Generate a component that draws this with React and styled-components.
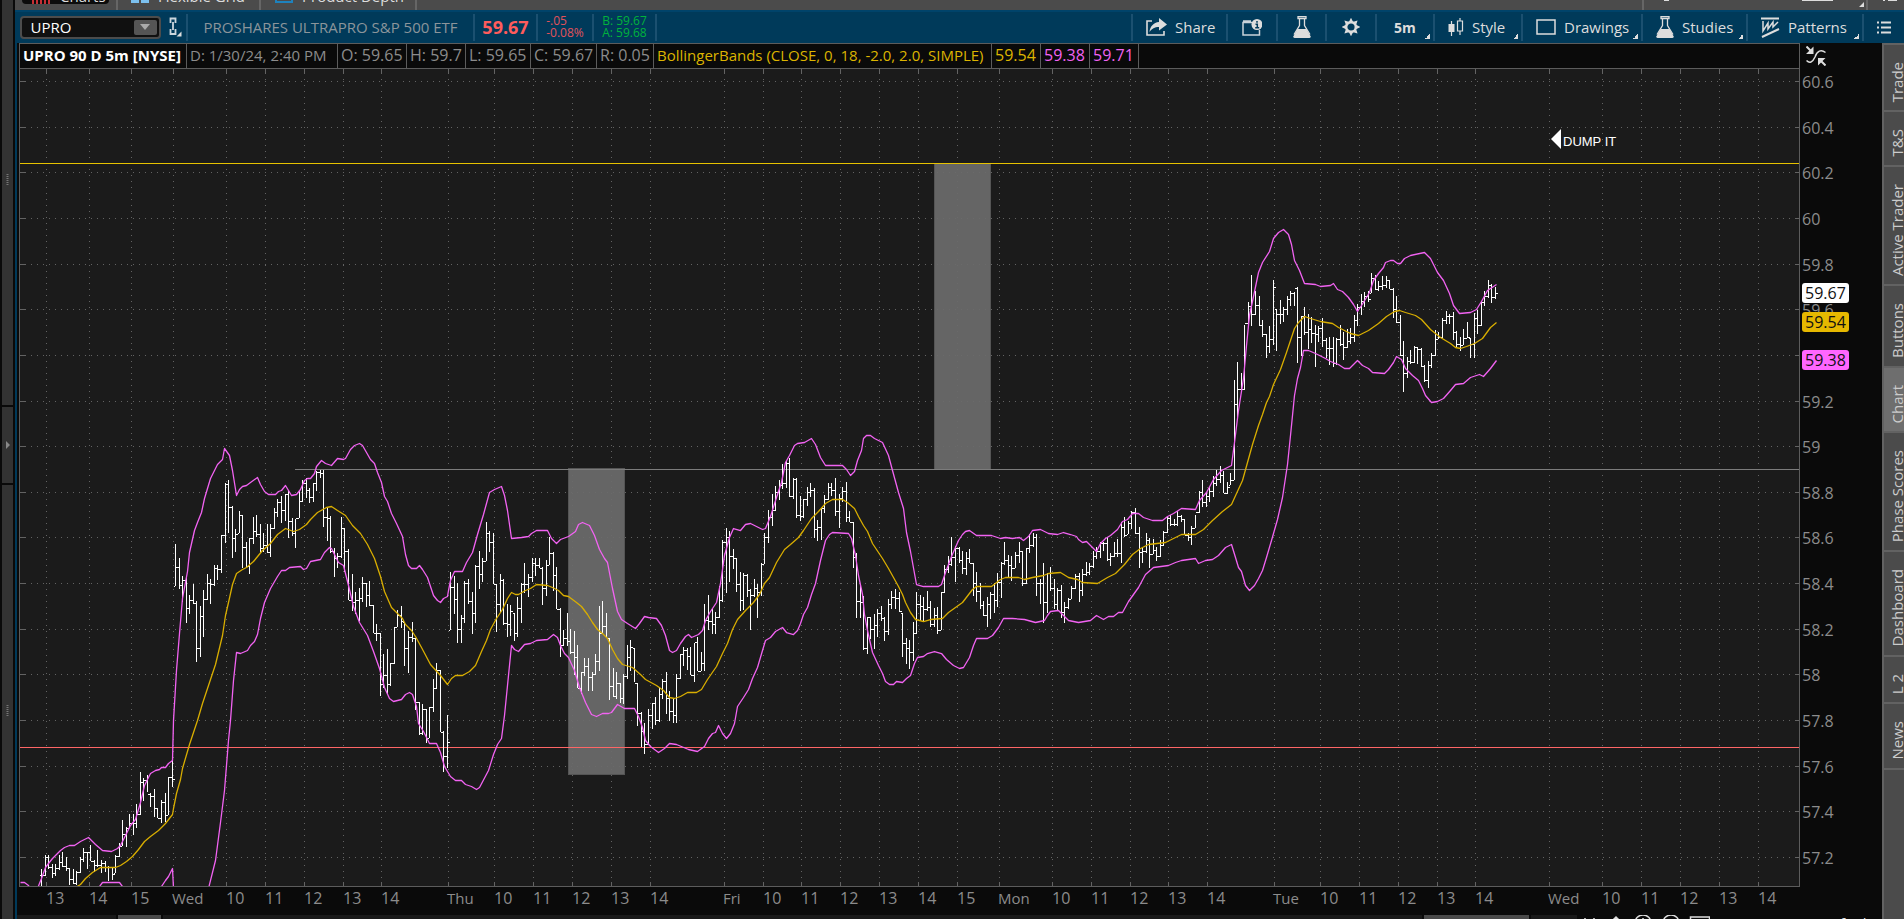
import React from 'react'
import styled, {createGlobalStyle} from 'styled-components';

const GlobalStyle=createGlobalStyle`
*{box-sizing:border-box}
html,body{margin:0;height:100%;background:#0a0a0a}
body{overflow:hidden;font-family:"Open Sans","Noto Sans",sans-serif;font-size:15px;color:#ddd}
button,input{font:inherit;color:inherit;border:0;margin:0;padding:0;background:none}
svg{display:block;flex:none}
`

// one entry per 5 minute bar: high, low, close
const bars=`869 886 875,855 876 857,855 869 867,864 878 873,864 876 868,855 870 862,852 867 866,857 871 868,868 885 879,869 884 883,
871 885 872,857 873 859,848 862 852,852 869 852,845 861 861,860 872 865,850 867 865,860 873 863,861 872 867,866 881 867,
867 880 874,855 873 856,843 857 846,820 846 834,827 847 828,814 828 823,814 835 823,804 828 814,772 815 782,778 801 780,
775 792 794,793 807 796,789 817 808,808 818 818,800 823 802,793 822 815,777 815 777,761 787 779,544 586 567,558 589 585,
576 602 580,576 623 608,595 614 600,584 604 603,601 662 648,606 657 616,590 637 599,574 600 583,579 604 584,565 586 568,
565 580 569,535 573 535,483 543 484,480 533 507,506 558 538,529 552 534,511 533 515,515 568 547,542 568 566,538 574 538,
517 544 531,515 537 534,524 553 548,533 552 545,524 553 552,524 557 528,508 529 512,499 517 502,496 523 510,494 521 494,
490 538 521,518 536 533,519 548 518,490 518 501,480 502 483,478 498 490,488 503 497,483 502 483,471 491 472,470 478 473,
470 527 517,507 541 518,516 553 551,548 577 558,553 568 556,517 558 528,528 572 551,549 600 600,574 611 602,592 614 600,
588 621 598,577 602 583,583 607 595,581 606 605,605 633 633,624 641 633,633 696 684,654 688 675,649 694 684,663 686 663,
627 664 627,610 627 615,606 628 621,622 666 648,631 673 637,622 642 638,638 710 702,702 735 733,704 735 709,709 743 738,
707 738 707,679 712 688,663 689 670,670 732 732,731 772 756,715 768 742,572 630 587,576 614 599,583 643 629,615 643 618,
581 623 583,579 604 601,592 634 613,565 623 566,551 589 574,558 582 561,522 561 533,531 552 542,533 584 584,584 632 604,
574 613 580,579 625 623,604 637 624,605 636 611,613 641 633,597 637 608,583 623 584,563 593 584,574 597 577,558 582 563,
558 576 565,558 568 568,567 605 588,560 596 565,537 565 553,552 591 575,567 609 609,608 657 645,630 646 638,613 646 641,
629 654 652,631 675 657,645 688 688,672 694 672,658 676 666,658 691 677,672 691 674,654 675 661,606 671 633,601 634 626,
613 638 638,638 700 686,668 697 696,672 699 683,683 703 698,674 704 676,645 679 657,640 671 647,648 682 683,683 726 713,
712 747 731,723 754 744,709 745 715,703 729 703,697 725 720,687 722 694,679 699 681,672 714 698,691 721 711,699 723 715,
674 723 678,654 679 654,647 666 650,648 670 656,647 675 675,643 682 642,637 671 671,652 671 663,604 671 620,595 630 621,
609 634 624,612 634 617,586 618 600,540 602 542,528 593 537,531 582 556,549 569 558,558 592 584,572 611 600,573 610 575,
574 597 590,589 630 595,579 597 588,584 618 592,563 596 564,533 564 537,510 543 517,494 526 510,486 511 492,480 500 485,
464 489 483,461 488 463,458 497 496,478 499 479,478 518 515,496 521 516,499 518 499,487 506 492,483 497 490,488 538 529,
520 541 527,508 540 508,495 513 499,483 500 487,483 496 490,478 516 511,494 528 498,487 502 491,482 522 517,511 522 522,
522 568 557,553 618 601,584 618 602,596 650 648,617 654 617,617 639 629,614 649 625,609 637 613,606 621 618,617 641 631,
599 635 604,591 609 597,589 609 598,592 612 611,613 657 643,638 664 648,640 669 652,622 661 633,592 634 604,595 621 606,
597 621 609,591 611 607,601 627 624,608 627 615,607 634 630,592 630 592,565 593 569,556 573 564,537 566 557,546 582 548,
547 563 560,551 574 568,552 575 558,549 563 563,563 596 583,572 602 591,583 609 605,601 616 615,597 627 604,592 619 594,
583 613 600,573 607 582,562 598 563,542 565 560,555 577 565,556 581 568,552 568 555,542 563 551,551 586 583,548 584 548,
534 553 545,533 547 537,534 596 583,579 604 583,563 623 602,573 613 573,567 591 588,579 609 604,588 611 590,585 618 612,
602 623 607,598 609 599,586 599 588,574 589 576,573 602 590,569 596 574,562 576 572,563 575 566,551 568 556,547 559 551,
542 558 543,542 551 543,537 561 559,553 566 556,542 557 553,539 557 553,522 563 527,517 537 535,521 534 523,511 529 512,
508 534 533,527 568 552,548 563 551,533 553 540,538 568 554,539 554 550,547 561 556,540 557 545,531 546 532,517 533 518,
515 526 524,519 526 524,511 526 516,515 522 519,519 535 535,533 541 537,526 545 528,515 528 512,491 513 492,480 507 502,
493 507 496,487 502 491,476 497 483,470 486 479,466 483 475,471 493 493,482 494 487,473 485 480,380 480 404,362 418 389,
373 390 389,325 390 323,302 324 306,275 326 314,291 315 305,296 326 325,320 337 334,334 358 346,326 353 339,280 345 287,
309 351 314,300 324 314,307 322 309,296 315 299,291 306 293,292 306 288,287 363 337,316 356 316,307 335 332,314 349 329,
317 343 333,325 367 334,326 342 328,318 347 340,338 358 348,337 365 348,337 367 363,338 365 339,325 346 344,332 360 347,
329 348 341,328 344 337,315 342 320,304 326 307,294 315 301,292 307 296,291 302 299,273 293 278,275 290 289,281 291 286,
276 290 285,276 288 280,280 289 289,288 318 309,296 323 322,315 356 355,341 392 373,357 378 361,350 364 362,346 363 347,
347 364 349,348 367 366,365 382 380,361 388 365,353 368 355,330 356 339,332 339 337,318 338 320,311 324 316,314 324 316,
312 340 332,331 347 344,337 351 345,329 345 338,322 338 337,338 358 344,313 358 318,310 334 325,301 326 302,291 306 296,
280 298 285,284 303 297,287 299 293`.split(',').map(b=>b.trim().split(' ').map(Number))

const upperBand=['20,882 24,882 28,885 30,888','37,888 41,878 45,867 48,863 52,858 56,854 60,850 64,847 69,845 74,845 80,841 88,837 95,844 102,850 111,851 117,848 120,845 126,833 130,825 135,819 140,802 144,785 150,773 155,770 159,769 161,767 165,767 168,763 172,760 173,720 176,670 179,633 182,598 187,571 189,552 194,530 197,522 201,512 204,498 210,478 217,464 222,459 224,448 229,455 232,470 236,495 239,489 242,486 246,485 250,482 257,477 260,484 264,491 268,494 275,494 278,491 281,490 285,485 288,490 291,495 296,494 300,489 304,480 307,478 310,478 314,473 316,466 321,460 325,463 331,465 337,458 343,459 345,458 350,449 354,445 359,443 362,445 366,452 370,459 374,463 377,472 381,482 384,496 387,501 391,513 396,523 402,536 405,554 408,565 411,568 416,568 419,565 422,569 427,577 433,595 437,600 440,602 443,598 447,596 448,590 450,580 454,571 462,571 466,562 472,552 477,534 483,514 489,492 494,489 501,486 504,495 507,510 511,538 521,537 528,536 531,533 536,530 547,530 551,538 556,543 560,539 568,536 575,531 578,524 582,522 589,525 594,535 599,549 604,558 607,562 612,588 617,611 621,619 627,623 635,628 639,623 644,616 648,617 656,618 661,625 665,635 669,650 672,652 676,650 680,643 685,636 688,634 691,637 698,634 702,630 705,620 710,611 716,602 720,583 724,555 729,537 733,528 740,530 745,524 750,523 756,526 762,529 765,528 770,516 776,497 781,482 785,462 789,455 794,445 797,443 804,442 811,438 815,444 820,457 825,465 842,465 846,469 850,475 854,471 857,460 861,450 863,438 866,435 870,435 874,438 882,442 888,455 892,470 898,492 903,508 906,532 910,551 916,584 923,586 938,586 941,584 945,572 951,556 958,540 962,534 965,531 969,530 976,535 991,535 1000,538 1005,537 1012,538 1019,537 1023,540 1028,536 1032,530 1040,529 1048,533 1057,534 1063,532 1070,534 1076,536 1078,539 1082,542 1086,541 1092,547 1096,551 1100,543 1105,538 1110,535 1117,529 1122,521 1127,519 1132,513 1138,513 1143,517 1152,520 1162,520 1167,516 1173,513 1181,508 1195,509 1199,500 1206,492 1213,479 1221,470 1231,465 1234,442 1238,410 1243,378 1246,345 1249,315 1253,296 1258,272 1262,262 1269,251 1273,238 1278,232 1283,229 1288,234 1291,244 1294,260 1299,270 1304,283 1315,284 1320,286 1330,285 1333,283 1337,289 1342,291 1348,297 1353,304 1357,311 1361,305 1366,297 1369,292 1373,280 1378,273 1383,267 1385,262 1390,260 1393,260 1397,263 1400,263 1404,258 1410,255 1424,252 1430,258 1437,272 1443,280 1449,293 1453,305 1459,313 1470,312 1476,309 1481,301 1487,290 1496,284']
const midLine=['75,887 80,884 85,878 92,872 100,867 115,867 120,865 126,861 132,856 138,849 144,841 150,836 158,830 165,823 172,814 173,808 176,793 180,779 182,768 189,744 197,720 202,703 207,688 215,664 222,635 225,615 228,602 232,584 236,573 242,569 246,567 253,561 262,550 270,543 277,534 285,528 293,531 299,529 306,524 310,519 317,512 326,507 331,506 337,510 345,515 352,525 360,533 367,544 374,558 380,576 384,591 391,607 396,612 402,618 405,624 411,630 415,636 421,647 430,664 440,675 447,684 451,678 455,675 462,675 469,671 475,665 481,651 486,640 490,629 496,618 502,609 507,598 511,592 515,594 518,594 525,590 530,588 536,584 547,585 552,587 558,590 563,595 568,596 576,602 581,606 587,614 592,622 597,629 602,633 607,638 612,649 617,658 622,664 632,667 640,674 645,679 656,685 663,690 669,697 674,698 680,696 687,692 696,692 701,689 707,679 716,666 722,653 727,643 732,629 737,619 745,610 753,602 759,594 764,583 769,577 776,562 784,549 790,544 798,537 803,530 811,518 818,511 825,503 832,499 842,499 847,502 854,508 858,516 863,525 867,531 872,543 882,558 888,568 898,586 902,594 905,602 910,612 915,619 923,621 930,619 942,618 948,612 962,602 972,589 976,586 991,586 1000,579 1005,577 1018,577 1024,579 1032,577 1043,575 1048,573 1060,572 1068,577 1077,579 1082,582 1097,583 1107,577 1115,573 1124,564 1132,554 1140,548 1148,544 1165,542 1175,537 1181,534 1195,534 1203,529 1212,520 1222,511 1231,504 1236,493 1242,480 1247,462 1252,444 1258,425 1262,414 1266,402 1269,396 1273,384 1280,369 1286,352 1291,337 1294,328 1298,322 1304,316 1310,318 1320,321 1332,323 1338,327 1350,333 1358,335 1368,330 1378,323 1386,316 1394,311 1399,310 1405,312 1415,315 1421,319 1430,329 1440,337 1450,343 1455,347 1460,348 1466,346 1474,343 1482,338 1490,327 1496,322']
const lowerBand=['99,886 102,882 108,882 119,882 122,886','161,886 165,880 168,876 172,868 173,888','208,888 215,860 220,822 224,790 228,740 230,720 233,680 236,652 240,653 247,650 250,645 254,641 257,634 260,618 264,602 270,588 277,576 281,570 285,570 289,567 300,566 303,569 306,568 310,561 320,559 324,552 329,547 331,548 336,558 338,562 343,565 348,585 353,606 359,622 367,635 373,651 379,668 384,687 389,698 393,701 401,699 405,694 409,692 412,694 416,706 418,723 423,731 429,743 436,743 440,752 444,766 450,776 455,780 461,780 465,784 471,786 476,789 479,787 488,770 493,754 497,744 501,738 504,715 507,685 511,645 514,649 518,651 524,644 530,643 536,640 547,639 553,634 557,637 560,645 564,653 568,657 574,670 579,687 585,702 591,714 596,716 602,713 608,713 611,712 617,704 624,708 634,708 638,716 642,727 645,740 650,746 658,752 664,748 669,743 676,744 688,749 697,751 704,746 708,738 712,733 715,732 718,725 722,733 726,738 730,733 734,723 737,706 743,697 748,689 752,678 757,667 762,650 765,640 770,637 775,631 782,627 786,632 793,634 797,630 800,623 803,614 807,607 811,594 815,583 820,560 825,540 829,534 832,532 848,533 851,538 855,555 858,575 862,594 864,614 867,630 872,652 878,665 882,673 885,681 889,684 893,684 896,681 902,682 906,678 910,675 914,663 917,657 923,656 927,653 934,651 941,653 946,659 953,665 959,668 963,667 969,657 973,645 976,638 987,638 992,635 998,627 1003,618 1012,618 1024,619 1035,622 1044,620 1047,615 1050,611 1058,610 1062,614 1068,620 1078,622 1090,620 1096,615 1103,619 1108,616 1113,616 1118,612 1122,612 1128,601 1138,587 1145,574 1153,567 1168,565 1175,562 1181,560 1195,558 1198,563 1205,560 1212,559 1218,555 1225,547 1231,544 1235,557 1238,567 1241,571 1245,585 1249,590 1254,585 1258,578 1262,570 1266,557 1271,540 1277,519 1282,497 1287,464 1290,435 1292,415 1294,395 1297,378 1300,367 1303,350 1308,350 1315,353 1325,358 1330,361 1338,364 1344,368 1349,368 1354,363 1357,360 1362,365 1368,368 1372,372 1384,373 1388,369 1393,362 1396,356 1401,359 1405,368 1412,375 1418,380 1422,388 1425,395 1431,402 1437,401 1443,398 1450,390 1455,384 1463,383 1470,377 1479,374 1483,376 1490,368 1496,360']

const times=[[46,'13'],[89,'14'],[131,'15'],[173,'Wed'],[226,'10'],[265,'11'],[304,'12'],[343,'13'],[381,'14'],[448,'Thu'],[494,'10'],[533,'11'],[572,'12'],[611,'13'],[650,'14'],[724,'Fri'],[763,'10'],[801,'11'],[840,'12'],[879,'13'],[918,'14'],[957,'15'],[999,'Mon'],[1052,'10'],[1091,'11'],[1130,'12'],[1168,'13'],[1207,'14'],[1274,'Tue'],[1320,'10'],[1359,'11'],[1398,'12'],[1437,'13'],[1475,'14'],[1549,'Wed'],[1602,'10'],[1641,'11'],[1680,'12'],[1719,'13'],[1758,'14']]
const prices=[[81,'60.6'],[127,'60.4'],[172,'60.2'],[218,'60'],[264,'59.8'],[309,'59.6'],[355,'59.4'],[401,'59.2'],[446,'59'],[492,'58.8'],[537,'58.6'],[583,'58.4'],[629,'58.2'],[674,'58'],[720,'57.8'],[766,'57.6'],[811,'57.4'],[857,'57.2']]
const tags=[[283,'59.67','#ffffff'],[312,'59.54','#e6b800'],[350,'59.38','#ff66ff']]

const isDay=t=>t.length>2
const barX=i=>Math.round(41+3.529*i)
const barPath=bars.map(([h,l,c],i)=>{
    const x=barX(i)
    const open=i?Math.min(l,Math.max(h,bars[i-1][2])):h+6
    return `M${x} ${h}h1V${l}h-1zM${x-1} ${open}h1v1h-1zM${x+1} ${c}h2v1h-2z`
}).join('')

const Screen=styled.div`
display:flex;
height:100vh;
min-width:1200px;
overflow:hidden;
`
const Rail=styled.aside`
display:flex;
flex-direction:column;
gap:2px;
flex:none;
width:15px;
padding:0 2px;
background:#0a0a0a;
`
const RailPart=styled.div`
display:flex;
flex:${p=>p.$grow||'none'};
height:${p=>p.$h?p.$h+'px':'auto'};
padding:${p=>p.$pad||0};
align-items:center;
justify-content:center;
background:#333;
color:#777;
`
const Main=styled.div`
display:flex;
flex-direction:column;
flex:1;
min-width:0;
`
const WindowTabs=styled.nav`
display:flex;
align-items:flex-end;
flex:none;
height:10px;
overflow:hidden;
background:#4b4b4b;
`
const WindowTab=styled.button`
display:flex;
align-items:flex-end;
flex:none;
gap:9px;
width:${p=>p.$w}px;
height:34px;
padding:0 0 4px ${p=>p.$pad}px;
line-height:20px;
white-space:nowrap;
border-right:2px solid #666;
svg{margin-bottom:3px}
`
const ActivePill=styled.span`
display:flex;
align-items:flex-end;
gap:10px;
width:87px;
height:30px;
padding-left:10px;
margin:0 0 2px -8px;
border-radius:4px;
background:#0c0c0c;
line-height:16px;
svg{margin-bottom:0}
`
const TabsEnd=styled.div`
margin-left:auto;
`
const Toolbar=styled.header`
display:flex;
align-items:center;
flex:none;
height:33px;
padding-bottom:1px;
background:#003a5a;
border-top:2px solid #00436a;
color:#ddd;
`
const Cell=styled.div`
display:flex;
align-items:center;
justify-content:center;
flex:${p=>p.$grow?1:'none'};
gap:8px;
width:${p=>p.$w?p.$w+'px':'auto'};
height:27px;
border-right:2px solid #1b5070;
color:${p=>p.$color||'inherit'};
white-space:nowrap;
`
const SymbolBox=styled.div`
display:flex;
align-items:center;
width:141px;
height:23px;
padding-right:2px;
border:2px solid #4c4c4c;
border-radius:4px;
background:#101010;
`
const SymbolInput=styled.input`
flex:1;
min-width:0;
padding-left:9px;
color:#fff;
line-height:19px;
`
const DropButton=styled.button`
display:flex;
align-items:center;
justify-content:center;
width:23px;
height:15px;
border-radius:2px;
background:#555;
color:#aaa;
`
const Title=styled.span`
color:#8b959b;
`
const Last=styled.strong`
font-size:18px;
font-weight:700;
color:#ff5c5c;
`
const Quote=styled.span`
font-size:12px;
line-height:12px;
`
const Stack=styled.div`
display:flex;
flex-direction:column;
`
const Tool=styled.button`
position:relative;
display:flex;
align-items:center;
justify-content:${p=>p.$center?'center':'flex-start'};
flex:none;
gap:8px;
width:${p=>p.$w}px;
height:27px;
padding-left:${p=>p.$center?0:13}px;
border-right:${p=>p.$last?0:2}px solid #1b5070;
font-size:${p=>p.$bold?14:15}px;
font-weight:${p=>p.$bold?700:400};
white-space:nowrap;
`
const Corner=styled.span`
position:absolute;
right:3px;
bottom:2px;
width:5px;
height:5px;
background:linear-gradient(135deg,transparent 50%,#ddd 50%);
`
const Body=styled.div`
display:flex;
flex:1;
min-height:0;
`
const ChartColumn=styled.main`
display:flex;
flex-direction:column;
flex:1;
min-width:0;
border-left:2px solid #003a5a;
padding-left:2px;
background:#0a0a0a;
`
const ChartRow=styled.div`
display:flex;
flex:1;
min-height:0;
`
const PlotColumn=styled.div`
display:flex;
flex-direction:column;
flex:1;
min-width:0;
`
const PlotFrame=styled.div`
display:flex;
flex-direction:column;
flex:1;
min-height:0;
border:1px solid #5c5c5c;
`
const InfoRow=styled.div`
display:flex;
flex:none;
height:25px;
border-bottom:1px solid #5c5c5c;
line-height:22px;
color:#8c8c8c;
`
const Info=styled.span`
flex:none;
min-width:${p=>p.$w}px;
padding-left:3px;
border-right:1px solid #5c5c5c;
color:${p=>p.$color||'inherit'};
font-weight:${p=>p.$bold?700:400};
font-size:${p=>p.$words?15:16}px;
white-space:nowrap;
`
const Plot=styled.svg`
flex:1;
width:100%;
min-height:0;
background:#1b1b1b;
`
const TimeAxis=styled.svg`
width:100%;
height:28px;
font-size:16px;
fill:#8c8c8c;
`
const PriceColumn=styled.div`
display:flex;
flex-direction:column;
flex:none;
width:82px;
overflow:hidden;
`
const FitButton=styled.button`
flex:none;
height:26px;
padding:3px 6px;
`
const PriceAxis=styled.svg`
flex:1;
width:100%;
min-height:0;
font-size:16px;
fill:#8c8c8c;
`
const BottomBar=styled.footer`
display:flex;
align-items:flex-start;
flex:none;
height:4px;
margin-left:-2px;
overflow:hidden;
`
const Track=styled.div`
display:flex;
flex:1;
gap:2px;
height:12px;
`
const TrackPart=styled.div`
flex:${p=>p.$grow?1:'none'};
width:${p=>p.$w}px;
background:${p=>p.$thumb?'#4a4a4a':'#191919'};
`
const BottomTools=styled.div`
display:flex;
flex:none;
width:305px;
gap:20px;
padding-left:7px;
line-height:16px;
white-space:nowrap;
`
const Gadgets=styled.nav`
display:flex;
flex-direction:column;
flex:none;
width:22px;
border-left:2px solid #626262;
border-top:2px solid #626262;
background:#4b4b4b;
`
const Gadget=styled.button`
display:flex;
flex:none;
justify-content:flex-start;
padding:17px 0 8px 3px;
overflow:hidden;
border-bottom:2px solid #626262;
background:${p=>p.$active?'#6e6e6e':'#4b4b4b'};
color:#ccc;
`
const Sideways=styled.span`
flex:none;
writing-mode:vertical-rl;
transform:rotate(180deg);
line-height:20px;
white-space:nowrap;
`

const Flask=()=>(
    <svg width="18" height="22" viewBox="0 0 18 22">
        <path d="M5 .5h8v2H5zM6.500 2.500v7L1 18.500M11.500 2.500v7l5.500 9" fill="none" stroke="#ddd" strokeWidth="1.300"/>
        <path d="M4.500 13h9l4.200 7.500q0 1.500-1.500 1.500H1.800Q.3 22 .3 20.500z" fill="#ddd"/>
    </svg>
)
const ShareIcon=()=>(
    <svg width="21" height="18" viewBox="0 0 21 18">
        <path d="M6 3H1v14h17v-4" fill="none" stroke="#ddd" strokeWidth="1.600"/>
        <path d="M13 0l8 6.500-8 6V9C8.500 9 6 10.500 3.500 14 4 8.500 7.500 4.500 13 4z" fill="#ddd"/>
    </svg>
)
const InfoIcon=()=>(
    <svg width="20" height="17" viewBox="0 0 20 17">
        <path d="M10 3.500H1v12.500h16.500v-5M1 2h8" fill="none" stroke="#c9d3da" strokeWidth="1.500"/>
        <circle cx="15" cy="5.500" r="5.500" fill="#ddd"/>
        <path d="M15 2v1.800M13.500 5.200h1.800v3.500M13.200 8.800h4" stroke="#003a5a" strokeWidth="1.500" fill="none"/>
    </svg>
)
const Gear=()=>(
    <svg width="18" height="18" viewBox="0 0 18 18">
        <g fill="#ddd">
            {[0,45,90,135,180,225,270,315].map(a=><path key={a} d="M6.600 4.500L9 -.3l2.400 4.800z" transform={`rotate(${a} 9 9)`}/>)}
        </g>
        <circle cx="9" cy="9" r="4.800" fill="none" stroke="#ddd" strokeWidth="2.400"/>
    </svg>
)
const Candles=()=>(
    <svg width="16" height="18" viewBox="0 0 16 18">
        <path d="M3.500 3v15M12 0v3M12 13v4" stroke="#ddd" strokeWidth="1.200"/>
        <path d="M.5 6h6v8h-6z" fill="#ddd"/>
        <path d="M9.500 3h5v10h-5z" fill="none" stroke="#ddd" strokeWidth="1.200"/>
    </svg>
)
const PatternIcon=()=>(
    <svg width="19" height="21" viewBox="0 0 19 21">
        <path d="M0 1.500h18M1 20l17-8" stroke="#ddd" strokeWidth="2"/>
        <path d="M2 4v10l5-8v6l5-7v5l5-5" fill="none" stroke="#ddd" strokeWidth="1.500"/>
    </svg>
)
const LinkIcon=()=>(
    <svg width="13" height="20" viewBox="0 0 13 20">
        <path d="M1.500 6V1.500h5V6M1.500 12v5h5v-5M4 5v8" fill="none" stroke="#ccd6dd" strokeWidth="1.800"/>
        <path d="M12.500 14.500v5h-5z" fill="#ddd"/>
    </svg>
)
const FitIcon=()=>(
    <svg width="20" height="20" viewBox="0 0 20 20">
        <path d="M.5 14.500c3 3 6 2 8.500-3.500 2-6 6-8 10.500-4.500" fill="none" stroke="#ddd" strokeWidth="1.500"/>
        <path d="M7.500 .5v7.500H0zM12 19.500V12h7.500z" fill="#ddd"/>
        <path d="M.5 .5l6 6M14 14l5.500 5.500" stroke="#ddd" strokeWidth="2"/>
    </svg>
)

function PlotDrawing(){
    return(
        <Plot role="img" aria-label="UPRO 5 minute price chart with Bollinger Bands">
            <g transform="translate(-20 -69)">
                <g stroke="#636363" strokeWidth="1" shapeRendering="crispEdges">
                    {prices.map(([y])=><line key={y} x1="25" x2="1799" y1={y+.5} y2={y+.5} strokeDasharray="1 5"/>)}
                    {prices.map(([y])=><path key={y} d={`M20 ${y+.5}h5M1795 ${y+.5}h4`}/>)}
                    {times.map(([x])=><line key={x} x1={x+.5} x2={x+.5} y1="73" y2="886" strokeDasharray="1 5"/>)}
                    {times.map(([x])=><path key={x} d={`M${x+.5} 69v5M${x+.5} 882v4`}/>)}
                </g>
                <g fill="#6a6a6a" fillOpacity=".94" stroke="#555">
                    <rect x="568.5" y="468.500" width="56" height="306"/>
                    <rect x="934.5" y="163.500" width="56" height="306"/>
                </g>
                <g strokeWidth="1" shapeRendering="crispEdges">
                    <path d="M20 163.500h1880" stroke="#e6c200"/>
                    <path d="M295 469.500h1600" stroke="#7c7c7c"/>
                    <path d="M20 747.500h1880" stroke="#ff6666"/>
                </g>
                <path d={barPath} fill="#fff" shapeRendering="crispEdges"/>
                <g transform="translate(.5 .5)" fill="none" strokeWidth="1.300" strokeLinejoin="round">
                    {midLine.map(p=><polyline key={p} points={p} stroke="#d9ae00"/>)}
                    {upperBand.concat(lowerBand).map(p=><polyline key={p} points={p} stroke="#f263f2"/>)}
                </g>
                <path d="M1551 139l10-10v20z" fill="#fff"/>
                <text x="1563" y="146" fill="#fff" fontSize="13" fontFamily="Liberation Sans, Arial, sans-serif">DUMP IT</text>
            </g>
        </Plot>
    )
}

function TopTabs(){
    return(
        <WindowTabs>
            <WindowTab $w={103} $pad={15}>
                <ActivePill>
                    <svg width="18" height="14"><path d="M1 2v12M5 0v14M9 3v11M13 1v13M17 2v12" stroke="#c62f35" strokeWidth="2"/></svg>
                    Charts
                </ActivePill>
            </WindowTab>
            <WindowTab $w={143} $pad={13}>
                <svg width="18" height="16"><path d="M0 0h8v7H0zM10 0h8v7h-8zM0 9h8v7H0zM10 9h8v7h-8z" fill="#7cc0ee"/></svg>
                Flexible Grid
            </WindowTab>
            <WindowTab $w={156} $pad={14}>
                <svg width="18" height="16"><path d="M1 1h16v14H1z" fill="none" stroke="#1e82bd" strokeWidth="2"/></svg>
                Product Depth
            </WindowTab>
            <TabsEnd>
                <svg width="262" height="10">
                    <path d="M0 0h2v10H0zM224 0h2v10h-2z" fill="#666"/>
                    <path d="M22 0h5v1h-5zM160 0h31v1h-31zM222 2v5h-5zM241 0h2v1h-2zM246 0h9v1h-9z" fill="#ddd"/>
                </svg>
            </TabsEnd>
        </WindowTabs>
    )
}

const tools=[
    ['Share',95,<ShareIcon/>],
    ['',50,<InfoIcon/>,'News and events'],
    ['',49,<Flask/>,'Edit studies'],
    ['',50,<Gear/>,'Chart settings'],
]

export default function App(){
    return(
        <Screen>
            <GlobalStyle/>
            <Rail>
                <RailPart $h={405} $pad="0 0 45px"><svg width="3" height="12"><path d="M1.500 0v12" stroke="#777" strokeWidth="2" strokeDasharray="1 1"/></svg></RailPart>
                <RailPart $h={76}><svg width="4" height="8"><path d="M0 0l4 4-4 4z" fill="#888"/></svg></RailPart>
                <RailPart $grow={1} $pad="18px 0 0"><svg width="3" height="12"><path d="M1.500 0v12" stroke="#777" strokeWidth="2" strokeDasharray="1 1"/></svg></RailPart>
            </Rail>
            <Main>
                <TopTabs/>
                <Toolbar>
                    <Cell $w={173}>
                        <SymbolBox>
                            <SymbolInput aria-label="Symbol" defaultValue="UPRO"/>
                            <DropButton aria-label="Symbol list">
                                <svg width="10" height="6"><path d="M0 0h10L5 6z" fill="#aaa"/></svg>
                            </DropButton>
                        </SymbolBox>
                        <LinkIcon/>
                    </Cell>
                    <Cell $w={287}><Title>PROSHARES ULTRAPRO S&amp;P 500 ETF</Title></Cell>
                    <Cell $w={63}><Last>59.67</Last></Cell>
                    <Cell $w={56} $color="#e0525a"><Stack><Quote>-.05</Quote><Quote>-0.08%</Quote></Stack></Cell>
                    <Cell $w={63} $color="#00b33c"><Stack><Quote>B: 59.67</Quote><Quote>A: 59.68</Quote></Stack></Cell>
                    <Cell $grow/>
                    {tools.map(([name,w,icon,label],i)=>(
                        <Tool key={i} $w={w} $center={!name} aria-label={label}>{icon}{name}</Tool>
                    ))}
                    <Tool $w={58} $center $bold>5m<Corner/></Tool>
                    <Tool $w={88}><Candles/>Style<Corner/></Tool>
                    <Tool $w={120}>
                        <svg width="20" height="16"><path d="M1 1h18v14H1z" fill="none" stroke="#ddd" strokeWidth="1.500"/></svg>
                        Drawings<Corner/>
                    </Tool>
                    <Tool $w={105}><Flask/>Studies<Corner/></Tool>
                    <Tool $w={116}><PatternIcon/>Patterns<Corner/></Tool>
                    <Tool $w={40} $center $last aria-label="Menu">
                        <svg width="14" height="13"><path d="M0 1.500h2M4 1.500h10M0 6.500h2M4 6.500h10M0 11.500h2M4 11.500h10" stroke="#ddd" strokeWidth="2"/></svg>
                    </Tool>
                </Toolbar>
                <Body>
                    <ChartColumn>
                        <ChartRow>
                            <PlotColumn>
                                <PlotFrame>
                                    <InfoRow>
                                        <Info $w={167} $bold $words $color="#fff">UPRO 90 D 5m [NYSE]</Info>
                                        <Info $w={151} $words>D: 1/30/24, 2:40 PM</Info>
                                        <Info $w={69}>O: 59.65</Info>
                                        <Info $w={59}>H: 59.7</Info>
                                        <Info $w={65}>L: 59.65</Info>
                                        <Info $w={66}>C: 59.67</Info>
                                        <Info $w={57}>R: 0.05</Info>
                                        <Info $w={338} $words $color="#dcb400">BollingerBands (CLOSE, 0, 18, -2.0, 2.0, SIMPLE)</Info>
                                        <Info $w={49} $color="#dcb400">59.54</Info>
                                        <Info $w={49} $color="#f263f2">59.38</Info>
                                        <Info $w={49} $color="#f263f2">59.71</Info>
                                    </InfoRow>
                                    <PlotDrawing/>
                                </PlotFrame>
                                <TimeAxis>
                                    {times.map(([x,t])=><text key={x} x={isDay(t)?x-20:x-19} y="17" fontSize={isDay(t)?15:16}>{t}</text>)}
                                </TimeAxis>
                            </PlotColumn>
                            <PriceColumn>
                                <FitButton aria-label="Fit chart"><FitIcon/></FitButton>
                                <PriceAxis>
                                    <g transform="translate(0 -69)">
                                        {prices.filter(([,t])=>t!=='59.4').map(([y,t])=><text key={t} x="2" y={y+7}>{t}</text>)}
                                        {tags.map(([y,t,c])=>(
                                            <g key={t}>
                                                <rect x="2" y={y} width="47" height="20" rx="3" fill={c}/>
                                                <text x="5" y={y+16} fill="#111">{t}</text>
                                            </g>
                                        ))}
                                    </g>
                                </PriceAxis>
                            </PriceColumn>
                        </ChartRow>
                        <BottomBar>
                            <Track>
                                <TrackPart $w={99}/>
                                <TrackPart $w={43} $thumb/>
                                <TrackPart $grow/>
                                <TrackPart $w={105} $thumb/>
                                <TrackPart $w={46}/>
                            </Track>
                            <BottomTools>
                                <svg width="126" height="14">
                                    <path d="M1 3v2M10 3v2M32 2v8M29 5l3-3 3 3" stroke="#ddd" fill="none" strokeWidth="1.500"/>
                                    <circle cx="59" cy="8" r="8" fill="none" stroke="#ddd" strokeWidth="1.500"/>
                                    <circle cx="87" cy="8" r="8" fill="none" stroke="#ddd" strokeWidth="1.500"/>
                                    <path d="M59 3v8M106.500 12V2h19v10" stroke="#ddd" fill="none" strokeWidth="1.500"/>
                                </svg>
                                Drawing set: Default
                            </BottomTools>
                        </BottomBar>
                    </ChartColumn>
                    <Gadgets>
                        {['Trade','T&S','Active Trader','Buttons','Chart','Phase Scores','Dashboard','L 2','News'].map(g=>(
                            <Gadget key={g} $active={g==='Chart'}><Sideways>{g}</Sideways></Gadget>
                        ))}
                    </Gadgets>
                </Body>
            </Main>
        </Screen>
    )
}
